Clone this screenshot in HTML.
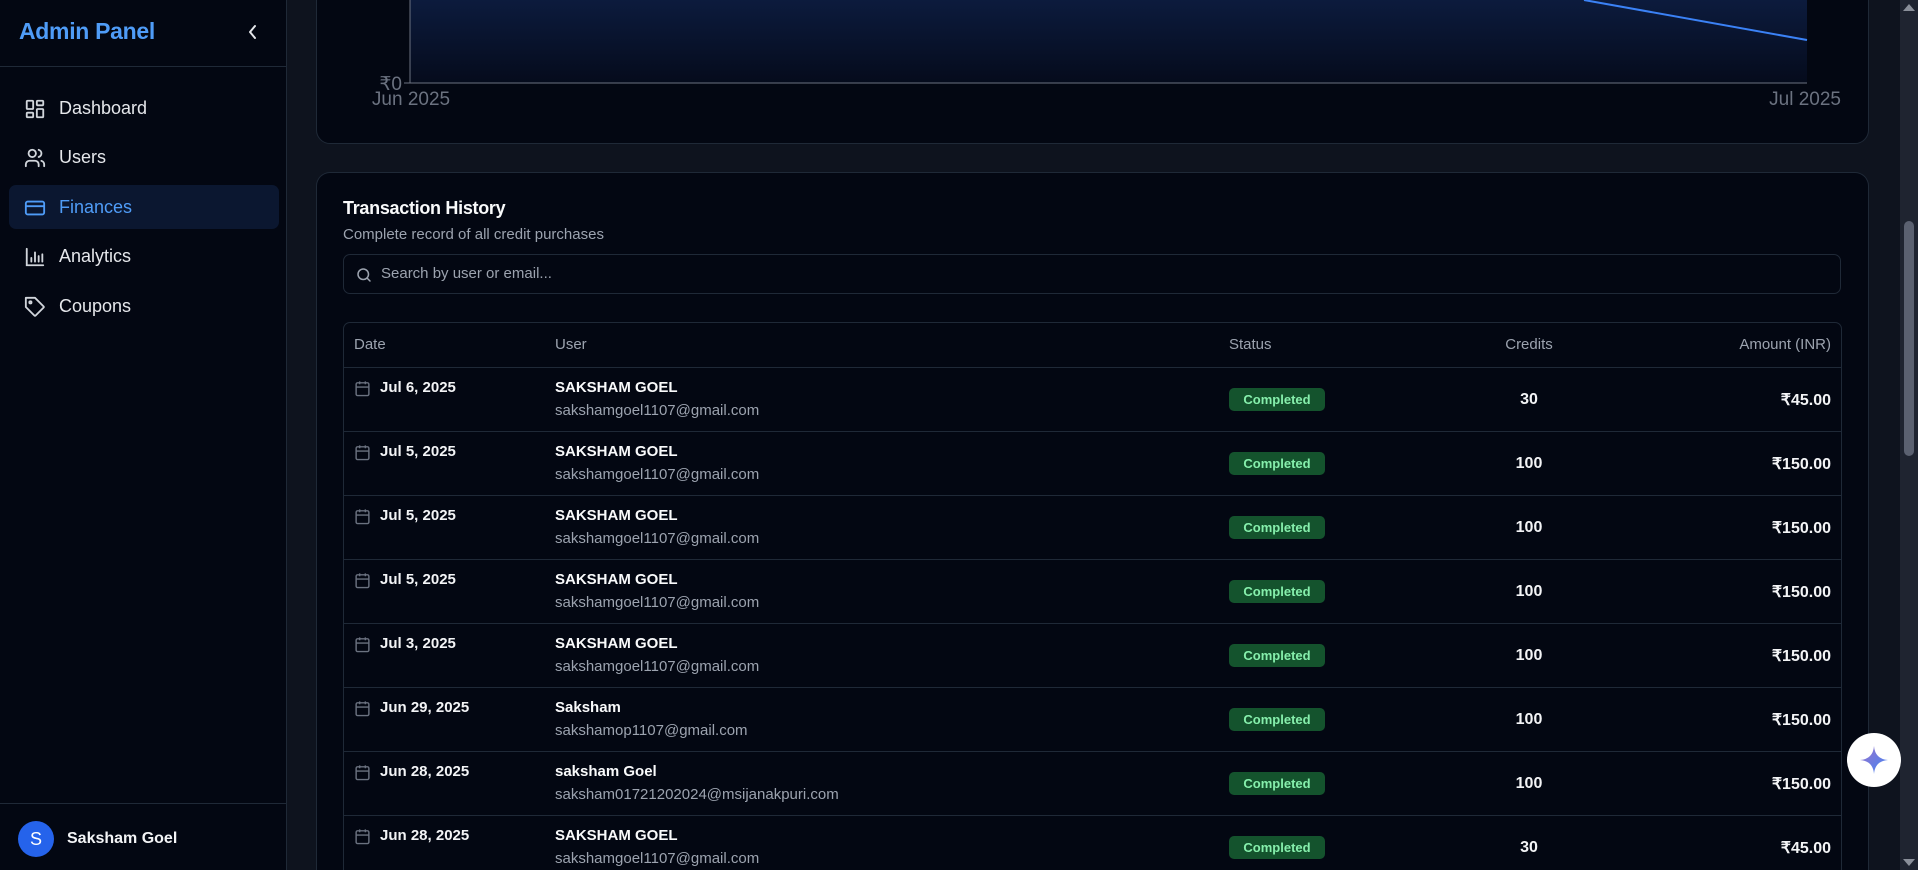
<!DOCTYPE html>
<html><head><meta charset="utf-8"><style>
*{box-sizing:border-box;margin:0;padding:0}
html,body{width:1918px;height:870px;overflow:hidden}
body{background:#0e131e;font-family:"Liberation Sans",sans-serif;color:#f3f4f6}
#wrap{position:relative;width:1918px;height:870px;overflow:hidden}
.sb{position:absolute;left:0;top:0;width:287px;height:870px;background:#030712;border-right:1px solid #1f2937;z-index:2}
.title{position:absolute;left:19px;top:18px;font-size:23px;font-weight:bold;color:#4f9cf7;letter-spacing:-0.3px}
.chev{position:absolute;left:246px;top:22px}
.sep{position:absolute;left:0;width:286px;height:1px;background:#1f2937}
.nav{position:absolute;left:9px;width:270px;height:44px;border-radius:7px}
.nav svg{position:absolute;left:15px;top:12px}
.nav span{position:absolute;left:50px;top:12px;font-size:18px;color:#e5e7eb}
.nav.act{background:#0b1730}
.nav.act span{color:#4f9cf7}
.card{position:absolute;left:316px;width:1553px;background:#030712;border:1px solid #1f2937;border-radius:14px}
.row{position:absolute;left:344px;width:1497px;height:64px;border-top:1px solid #1f2937}
.cell{position:absolute;font-size:16px}
.badge{position:absolute;left:885px;top:20px;width:96px;height:23px;background:#14532d;border-radius:5px;color:#86efac;font-size:13px;font-weight:bold;text-align:center;line-height:23px}
</style></head><body><div id="wrap">
<div class="sb">
<div class="title">Admin Panel</div>
<svg class="chev" width="14" height="20" viewBox="0 0 14 20"><path d="M9 4 L4 10 L9 16" stroke="#e5e7eb" stroke-width="2" fill="none" stroke-linecap="round" stroke-linejoin="round"/></svg>
<div class="sep" style="top:66px"></div>
<div class="nav" style="top:86px"><svg width="22" height="22" viewBox="0 0 24 24" fill="none" stroke="#d1d5db" stroke-width="2"><rect x="3" y="3" width="7" height="9" rx="1"/><rect x="14" y="3" width="7" height="5" rx="1"/><rect x="14" y="12" width="7" height="9" rx="1"/><rect x="3" y="16" width="7" height="5" rx="1"/></svg><span>Dashboard</span></div>
<div class="nav" style="top:135px"><svg width="22" height="22" viewBox="0 0 24 24" fill="none" stroke="#d1d5db" stroke-width="2" stroke-linecap="round"><path d="M16 21v-2a4 4 0 0 0-4-4H6a4 4 0 0 0-4 4v2"/><circle cx="9" cy="7" r="4"/><path d="M22 21v-2a4 4 0 0 0-3-3.87M16 3.13a4 4 0 0 1 0 7.750"/></svg><span>Users</span></div>
<div class="nav act" style="top:185px"><svg width="22" height="22" viewBox="0 0 24 24" fill="none" stroke="#4f9cf7" stroke-width="2"><rect x="2" y="5" width="20" height="14" rx="2"/><line x1="2" y1="10" x2="22" y2="10"/></svg><span>Finances</span></div>
<div class="nav" style="top:234px"><svg width="22" height="22" viewBox="0 0 24 24" fill="none" stroke="#d1d5db" stroke-width="2" stroke-linecap="round"><path d="M3 3v18h18"/><path d="M8 17v-4M12 17V7M16 17v-6M20 17V9"/></svg><span>Analytics</span></div>
<div class="nav" style="top:284px"><svg width="22" height="22" viewBox="0 0 24 24" fill="none" stroke="#d1d5db" stroke-width="2" stroke-linejoin="round"><path d="M12 2H2v10l9.3 9.3a1 1 0 0 0 1.4 0l8.6-8.6a1 1 0 0 0 0-1.4Z"/><circle cx="7" cy="7" r="1.2"/></svg><span>Coupons</span></div>
<div class="sep" style="top:803px"></div>
<div style="position:absolute;left:18px;top:821px;width:36px;height:36px;border-radius:50%;background:#2563eb;color:#fff;font-size:18px;text-align:center;line-height:36px">S</div>
<div style="position:absolute;left:67px;top:830px;font-size:16px;font-weight:bold;color:#f3f4f6">Saksham Goel</div>
</div>

<div class="card" style="top:-20px;height:164px"></div>
<svg style="position:absolute;left:316px;top:0" width="1553" height="130">
<defs><linearGradient id="g" x1="0" y1="0" x2="0" y2="1"><stop offset="0" stop-color="#0c1b3d"/><stop offset="1" stop-color="#050b1c"/></linearGradient></defs>
<rect x="94" y="0" width="1397" height="83" fill="url(#g)"/>
<path d="M1268 0 Q1380 20 1491 40" stroke="#3b82f6" stroke-width="2" fill="none"/>
<line x1="94" y1="0" x2="94" y2="83" stroke="#6b7280"/>
<line x1="94" y1="83" x2="1491" y2="83" stroke="#6b7280"/>
<line x1="88" y1="83" x2="94" y2="83" stroke="#6b7280"/>
<text x="86" y="90" text-anchor="end" font-size="19" fill="#6b7280" font-family="Liberation Sans">₹0</text>
<text x="95" y="105" text-anchor="middle" font-size="19" fill="#6b7280" font-family="Liberation Sans">Jun 2025</text>
<text x="1525" y="105" text-anchor="end" font-size="19" fill="#6b7280" font-family="Liberation Sans">Jul 2025</text>
</svg>

<div class="card" style="top:172px;height:698px;border-bottom-left-radius:0;border-bottom-right-radius:0;border-bottom:none"></div>
<div style="position:absolute;left:343px;top:198px;font-size:18px;font-weight:bold;color:#f9fafb;letter-spacing:-0.3px">Transaction History</div>
<div style="position:absolute;left:343px;top:226px;font-size:15px;color:#9ca3af">Complete record of all credit purchases</div>
<div style="position:absolute;left:343px;top:254px;width:1498px;height:40px;border:1px solid #1f2937;border-radius:7px;background:#030712">
<svg style="position:absolute;left:11px;top:11px" width="18" height="18" viewBox="0 0 24 24" fill="none" stroke="#9ca3af" stroke-width="2" stroke-linecap="round"><circle cx="11" cy="11" r="7"/><path d="m20 20-4-4"/></svg>
<span style="position:absolute;left:37px;top:10px;font-size:15px;color:#9ca3af">Search by user or email...</span></div>
<div style="position:absolute;left:343px;top:322px;width:1499px;height:548px;border:1px solid #1f2937;border-bottom:none;border-radius:7px 7px 0 0"></div>
<div style="position:absolute;left:344px;top:322px;width:1497px;height:45px;font-size:15px;color:#9ca3af">
<span style="position:absolute;left:10px;top:14px">Date</span><span style="position:absolute;left:211px;top:14px">User</span><span style="position:absolute;left:885px;top:14px">Status</span><span style="position:absolute;left:1135px;top:14px;width:100px;text-align:center">Credits</span><span style="position:absolute;right:10px;top:14px">Amount (INR)</span></div>

<div id="rows"></div>
<script>
const d=[["Jul 6, 2025","SAKSHAM GOEL","sakshamgoel1107@gmail.com","30","₹45.00"],
["Jul 5, 2025","SAKSHAM GOEL","sakshamgoel1107@gmail.com","100","₹150.00"],
["Jul 5, 2025","SAKSHAM GOEL","sakshamgoel1107@gmail.com","100","₹150.00"],
["Jul 5, 2025","SAKSHAM GOEL","sakshamgoel1107@gmail.com","100","₹150.00"],
["Jul 3, 2025","SAKSHAM GOEL","sakshamgoel1107@gmail.com","100","₹150.00"],
["Jun 29, 2025","Saksham","sakshamop1107@gmail.com","100","₹150.00"],
["Jun 28, 2025","saksham Goel","saksham01721202024@msijanakpuri.com","100","₹150.00"],
["Jun 28, 2025","SAKSHAM GOEL","sakshamgoel1107@gmail.com","30","₹45.00"]];
let h="";d.forEach((r,i)=>{const hh=i==7?55:64;h+=`<div class="row" style="top:${367+i*64}px;height:${hh}px;overflow:hidden">
<svg style="position:absolute;left:10px;top:12px" width="17" height="17" viewBox="0 0 24 24" fill="none" stroke="#6b7280" stroke-width="2"><rect x="3" y="4" width="18" height="18" rx="2"/><path d="M16 2v4M8 2v4M3 10h18"/></svg>
<span class="cell" style="left:36px;top:11px;font-weight:bold;color:#f3f4f6;font-size:15px">${r[0]}</span>
<span class="cell" style="left:211px;top:11px;font-weight:bold;color:#f9fafb;font-size:15px">${r[1]}</span>
<span class="cell" style="left:211px;top:34px;color:#9ca3af;font-size:15px">${r[2]}</span>
<div class="badge">Completed</div>
<span class="cell" style="left:1135px;top:23px;width:100px;text-align:center;font-weight:bold">${r[3]}</span>
<span class="cell" style="right:10px;top:22px;font-weight:bold">${r[4]}</span></div>`});
document.getElementById("rows").innerHTML=h;
</script>

<div style="position:absolute;left:1900px;top:0;width:18px;height:870px;background:#1f2430"></div>
<div style="position:absolute;left:1904px;top:221px;width:10px;height:235px;background:#5b6170;border-radius:5px"></div>
<div style="position:absolute;left:1903px;top:4px;width:0;height:0;border-left:6px solid transparent;border-right:6px solid transparent;border-bottom:7px solid #8a8f99"></div>
<div style="position:absolute;left:1903px;top:859px;width:0;height:0;border-left:6px solid transparent;border-right:6px solid transparent;border-top:7px solid #8a8f99"></div>
<div style="position:absolute;left:1847px;top:733px;width:54px;height:54px;border-radius:50%;background:#fff">
<svg style="position:absolute;left:13px;top:13px" width="28" height="28" viewBox="0 0 28 28"><defs><linearGradient id="s" x1="0" y1="0" x2="1" y2="1"><stop offset="0" stop-color="#9b72cb"/><stop offset="1" stop-color="#4285f4"/></linearGradient></defs><path d="M14 0 Q15 13 28 14 Q15 15 14 28 Q13 15 0 14 Q13 13 14 0Z" fill="url(#s)"/></svg></div>
</div></body></html>
